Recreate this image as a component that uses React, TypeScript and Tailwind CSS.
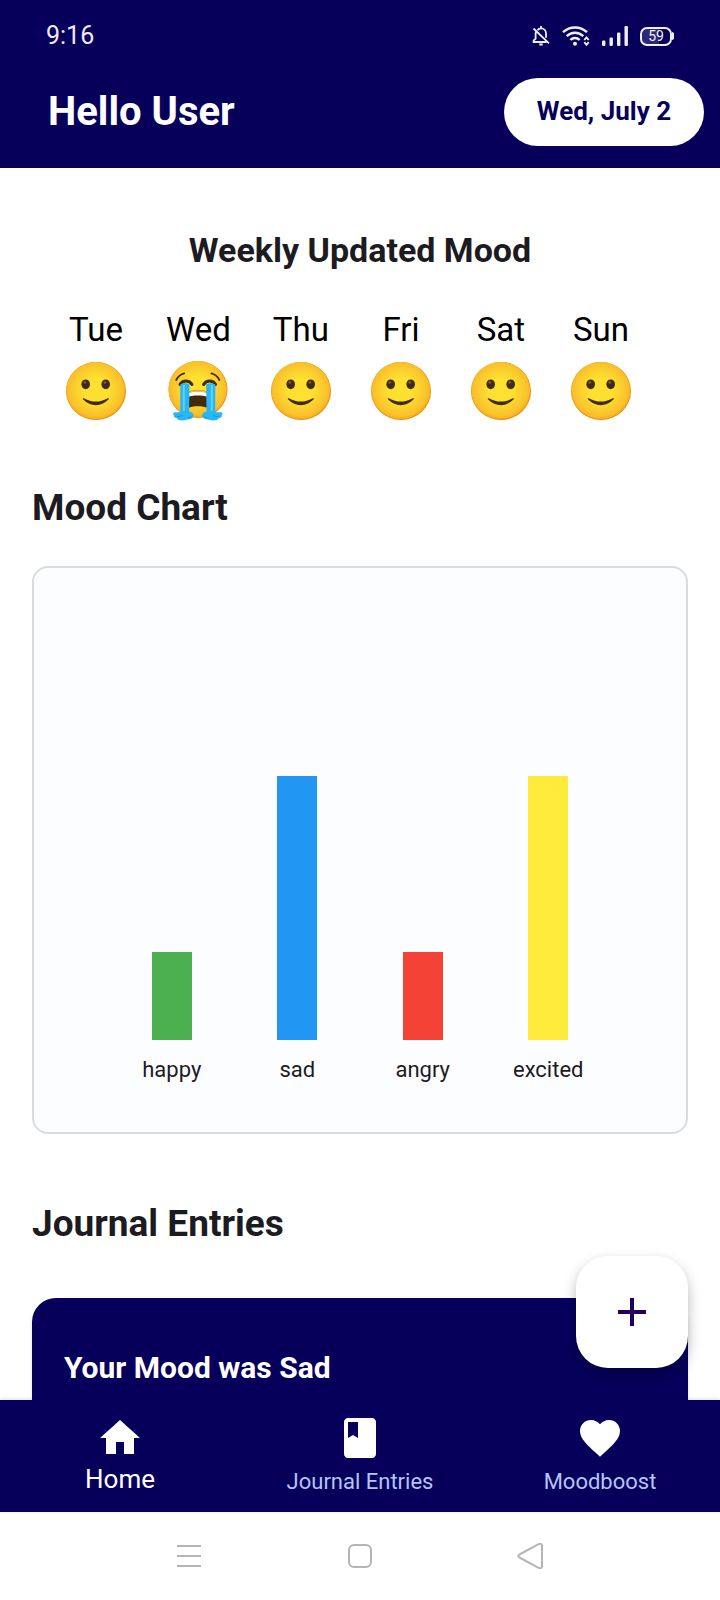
import type { ReactNode } from 'react';

type Mood = 'smile' | 'cry';

const week: { day: string; mood: Mood }[] = [
  { day: 'Tue', mood: 'smile' },
  { day: 'Wed', mood: 'cry' },
  { day: 'Thu', mood: 'smile' },
  { day: 'Fri', mood: 'smile' },
  { day: 'Sat', mood: 'smile' },
  { day: 'Sun', mood: 'smile' },
];

const chart = [
  { label: 'happy', value: 1, color: 'bg-[#4caf50]' },
  { label: 'sad', value: 3, color: 'bg-[#2196f3]' },
  { label: 'angry', value: 1, color: 'bg-[#f44336]' },
  { label: 'excited', value: 3, color: 'bg-[#ffeb3b]' },
];

const UNIT_HEIGHT = 88;

function FaceGradient({ id }: { id: string }) {
  return (
    <radialGradient id={id} cx="0.5" cy="0.48" r="0.52">
      <stop offset="0.4" stopColor="#fde030" />
      <stop offset="0.9" stopColor="#f9c02b" />
      <stop offset="1" stopColor="#f5a827" />
    </radialGradient>
  );
}

function SmileFace({ id }: { id: string }) {
  return (
    <svg viewBox="0 0 60 60" className="size-[60px]" role="img" aria-label="Smiling face">
      <defs>
        <FaceGradient id={id} />
      </defs>
      <ellipse cx="30" cy="30" rx="30" ry="29" fill="#eb8f00" />
      <ellipse cx="29.7" cy="29.6" rx="29.5" ry="28.5" fill={`url(#${id})`} />
      <ellipse cx="19.7" cy="23.3" rx="4.3" ry="4.9" fill="#422b0d" />
      <ellipse cx="39.7" cy="23.3" rx="4.3" ry="4.9" fill="#422b0d" />
      <ellipse cx="18.8" cy="21.5" rx="1.3" ry="1.2" fill="#896024" />
      <ellipse cx="38.8" cy="21.5" rx="1.3" ry="1.2" fill="#896024" />
      <path
        d="M17.2 38.600c-.9-1.100-.3-1.900 1.100-1.100 7 4.100 16 4.100 23 0 1.400-.8 2-.1 1.100 1.100C38.500 42.300 34.500 44.300 29.800 44.300S21 42.300 17.200 38.600z"
        fill="#422b0d"
      />
    </svg>
  );
}

function CryFace({ id }: { id: string }) {
  return (
    <svg viewBox="0 0 60 60" className="size-[60px]" role="img" aria-label="Crying face">
      <defs>
        <FaceGradient id={id} />
      </defs>
      <ellipse cx="30" cy="28.5" rx="29.5" ry="28.5" fill="#eb8f00" />
      <ellipse cx="29.7" cy="28.2" rx="29.1" ry="28.1" fill={`url(#${id})`} />
      <g fill="none" stroke="#422b0d" strokeLinecap="round">
        <path d="M8.200 19c1.800-3.400 4.400-5.800 8-6.600" strokeWidth="1.800" />
        <path d="M51.400 19c-1.800-3.400-4.400-5.800-8-6.600" strokeWidth="1.800" />
        <path d="M12 23.500c2.500-4.800 9.300-4.800 12 0" strokeWidth="3" />
        <path d="M47.600 23.500c-2.500-4.800-9.300-4.800-12 0" strokeWidth="3" />
      </g>
      <path d="M20 32.500c5-2.600 14.600-2.600 19.600 0v14.500c-5-2.200-14.600-2.200-19.600 0z" fill="#422b0d" />
      <path d="M20 32.500c5-2.600 14.600-2.600 19.600 0v3.300c-6-1.600-13.600-1.600-19.600 0z" fill="#fff" />
      <path d="M20 31c5.500-2.200 14-2.200 19.600 0" fill="none" stroke="#eb8f00" strokeWidth="0.8" />
      <g id={`${id}-tear`}>
        <path
          d="M12.300 23.500q4.500-3 9.200 0l-.4 27c2.500.4 4.600 2 4.400 4.200-.2 2.700-3.500 3.700-6.300 3.700-3.700 1.800-9.200 1.200-10.600-1.500-2.200.2-3.300-1.100-2.500-2.400-1.700-1.500-1-3.500 1.200-3.300 1.700.2 3.200.4 5-.8z"
          fill="#29b6f6"
        />
        <path d="M15.800 24v26" stroke="#63d0ff" strokeWidth="2" fill="none" />
        <path d="M9 55.500c2.500.4 4.300-.4 5.600-1.600M19 57c2.500 0 4-.8 5-2" stroke="#0d93dc" strokeWidth="0.8" fill="none" />
      </g>
      <use href={`#${id}-tear`} transform="matrix(-1 0 0 1 59.600 0)" />
    </svg>
  );
}

function StatusBar() {
  return (
    <div className="flex h-[72px] items-center justify-between px-[46px]">
      <span className="text-[25px] leading-8 text-[#eceaf8]">9:16</span>
      <div className="flex items-center gap-3 text-[#f0eff8]">
        <svg viewBox="0 0 18 20" className="h-5 w-[18px]" fill="none" stroke="currentColor" strokeWidth="1.8">
          <path d="M5.500 4.200C6.300 3 7.500 2.300 9 2.300c3 0 5 2.300 5 5.200v4.200M14.500 16H1.600v-1.400l2-2V8c0-.8.1-1.400.4-2M1.500 2.500l15.500 14.800" />
          <path d="M9 0v2.500" />
          <path d="M7.300 18.500h3.400" strokeWidth="2" />
        </svg>
        <svg viewBox="0 0 28 20" className="h-5 w-7" fill="none" stroke="currentColor" strokeWidth="2.5">
          <path d="M1 6.200C7.800-.2 18.200-.2 25 6.200M4.700 10.200c4.800-4.600 11.800-4.600 16.600 0M8.400 14c2.500-2.600 6.700-2.600 9.200 0" />
          <circle cx="13" cy="17.800" r="2" fill="currentColor" stroke="none" />
          <path d="M22.300 14l2.200-2.600 2.200 2.600M22.300 16.200l2.200 2.600 2.200-2.600" strokeWidth="1.900" />
        </svg>
        <svg viewBox="0 0 26 20" className="h-5 w-[26px]" fill="currentColor">
          <rect x="0" y="14.5" width="3.4" height="5.5" rx="1.2" />
          <rect x="7.5" y="11.5" width="3.4" height="8.5" rx="1.2" />
          <rect x="15" y="6.5" width="3.4" height="13.5" rx="1.2" />
          <rect x="22.500" y="0" width="3.4" height="20" rx="1.2" />
        </svg>
        <div className="flex items-center">
          <span className="flex h-[19px] w-8 items-center justify-center rounded-[7px] border-2 border-current bg-linear-to-r from-[#2b2875] from-60% to-[#06005b] to-60% text-[14px] leading-none">
            59
          </span>
          <span className="h-2 w-[2px] rounded-r bg-current" />
        </div>
      </div>
    </div>
  );
}

function NavItem({ label, active, children }: { label: string; active?: boolean; children: ReactNode }) {
  return (
    <a href="#" aria-current={active ? 'page' : undefined} className="flex flex-1 flex-col items-center pt-[14px]">
      <svg viewBox="0 0 24 24" className="size-12" fill="#ffffff" aria-hidden="true">
        {children}
      </svg>
      <span
        className={
          active ? 'text-[26px] leading-[34px] text-white' : 'text-[22px] leading-10 text-[#b4c4f6]'
        }
      >
        {label}
      </span>
    </a>
  );
}

export default function App() {
  return (
    <div className="flex h-screen flex-col overflow-hidden bg-white font-['Roboto','Noto_Sans',sans-serif]">
      <header className="h-[168px] shrink-0 bg-[#06005b]">
        <StatusBar />
        <div className="flex items-center justify-between pl-12 pr-4 pt-[6px]">
          <h1 className="text-[40px] font-bold leading-[68px] text-white">Hello User</h1>
          <button
            type="button"
            className="h-[68px] min-w-[200px] rounded-[36px] bg-white px-8 pb-[2px] text-[26px] font-bold text-[#06005b]"
          >
            Wed, July 2
          </button>
        </div>
      </header>

      <div className="relative flex min-h-0 flex-1 flex-col">
        <main className="min-h-0 flex-1 overflow-y-auto px-8 [scrollbar-width:none]">
          <section>
            <h2 className="pt-[62px] text-center text-[34px] font-bold leading-10 text-[#1c1b1f]">
              Weekly Updated Mood
            </h2>
            <ul className="mt-9 flex gap-10 pl-[34px]">
              {week.map(({ day, mood }) => (
                <li key={day} className="flex min-w-[60px] flex-col items-center gap-[7px] text-black">
                  <span className="text-[33px] leading-[48px]">{day}</span>
                  {mood === 'smile' ? <SmileFace id={`face-${day}`} /> : <CryFace id={`face-${day}`} />}
                </li>
              ))}
            </ul>
          </section>

          <section>
            <h2 className="mt-[63px] text-[37px] font-bold leading-[48px] text-[#1c1b1f]">Mood Chart</h2>
            <div className="mt-[34px] h-[568px] rounded-2xl border-2 border-[#d9dbdd] bg-[#fcfdff] px-[75px] pb-11">
              <div className="grid h-full grid-cols-4">
                {chart.map(({ label, value, color }) => (
                  <div key={label} className="flex flex-col items-center justify-end">
                    <div className={`w-10 ${color}`} style={{ height: value * UNIT_HEIGHT }} />
                    <span className="mt-3 text-[22px] leading-9 text-[#1c1b1f]">{label}</span>
                  </div>
                ))}
              </div>
            </div>
          </section>

          <section>
            <h2 className="mt-16 text-[37px] font-bold leading-[52px] text-[#1c1b1f]">Journal Entries</h2>
            <article className="mt-12 h-60 rounded-3xl bg-[#06005b] px-8 pt-12 shadow-md">
              <h3 className="text-[30px] font-bold leading-11 text-white">Your Mood was Sad</h3>
            </article>
          </section>
        </main>

        <button
          type="button"
          aria-label="Add entry"
          className="absolute bottom-8 right-8 flex size-28 items-center justify-center rounded-[32px] bg-white shadow-[0_6px_14px_rgba(0,0,0,0.28)]"
        >
          <svg viewBox="0 0 28 28" className="size-7" fill="#21005d">
            <path d="M12 0h4v12h12v4H16v12h-4V16H0v-4h12z" />
          </svg>
        </button>
      </div>

      <nav className="relative flex h-28 shrink-0 bg-[#06005b] shadow-[0_-1px_4px_rgba(0,0,0,0.12)]">
        <NavItem label="Home" active>
          <path d="M10 20v-6h4v6h5v-8h3L12 3 2 12h3v8z" />
        </NavItem>
        <NavItem label="Journal Entries">
          <path
            fillRule="evenodd"
            d="M18 2H6c-1.100 0-2 .9-2 2v16c0 1.100.9 2 2 2h12c1.100 0 2-.9 2-2V4c0-1.100-.9-2-2-2zM6 4h5v8l-2.500-1.500L6 12V4z"
          />
        </NavItem>
        <NavItem label="Moodboost">
          <path d="M12 21.350l-1.450-1.320C5.400 15.360 2 12.280 2 8.500 2 5.420 4.420 3 7.500 3c1.740 0 3.410.81 4.500 2.090C13.090 3.810 14.760 3 16.500 3 19.580 3 22 5.420 22 8.500c0 3.780-3.400 6.860-8.550 11.540L12 21.350z" />
        </NavItem>
      </nav>

      <div className="flex h-[88px] shrink-0 items-center justify-center gap-[144px] bg-white text-[#b5b5b5]">
        <button type="button" aria-label="Recent apps">
          <svg viewBox="0 0 26 26" className="size-[26px]" fill="none" stroke="currentColor" strokeWidth="2">
            <path d="M0 3h24M0 13h24M0 23h24" />
          </svg>
        </button>
        <button type="button" aria-label="Home screen">
          <svg viewBox="0 0 26 26" className="size-[26px]" fill="none" stroke="currentColor" strokeWidth="2">
            <rect x="2" y="2" width="22" height="22" rx="5" />
          </svg>
        </button>
        <button type="button" aria-label="Back">
          <svg viewBox="0 0 26 26" className="size-[26px]" fill="none" stroke="currentColor" strokeWidth="2" strokeLinejoin="round">
            <path d="M2.500 11.500L21.500 1.200Q24.500 0 25 2.500V23.500Q24.500 26 21.500 24.800L2.500 14.500Q0 13 2.500 11.500z" />
          </svg>
        </button>
      </div>
    </div>
  );
}
